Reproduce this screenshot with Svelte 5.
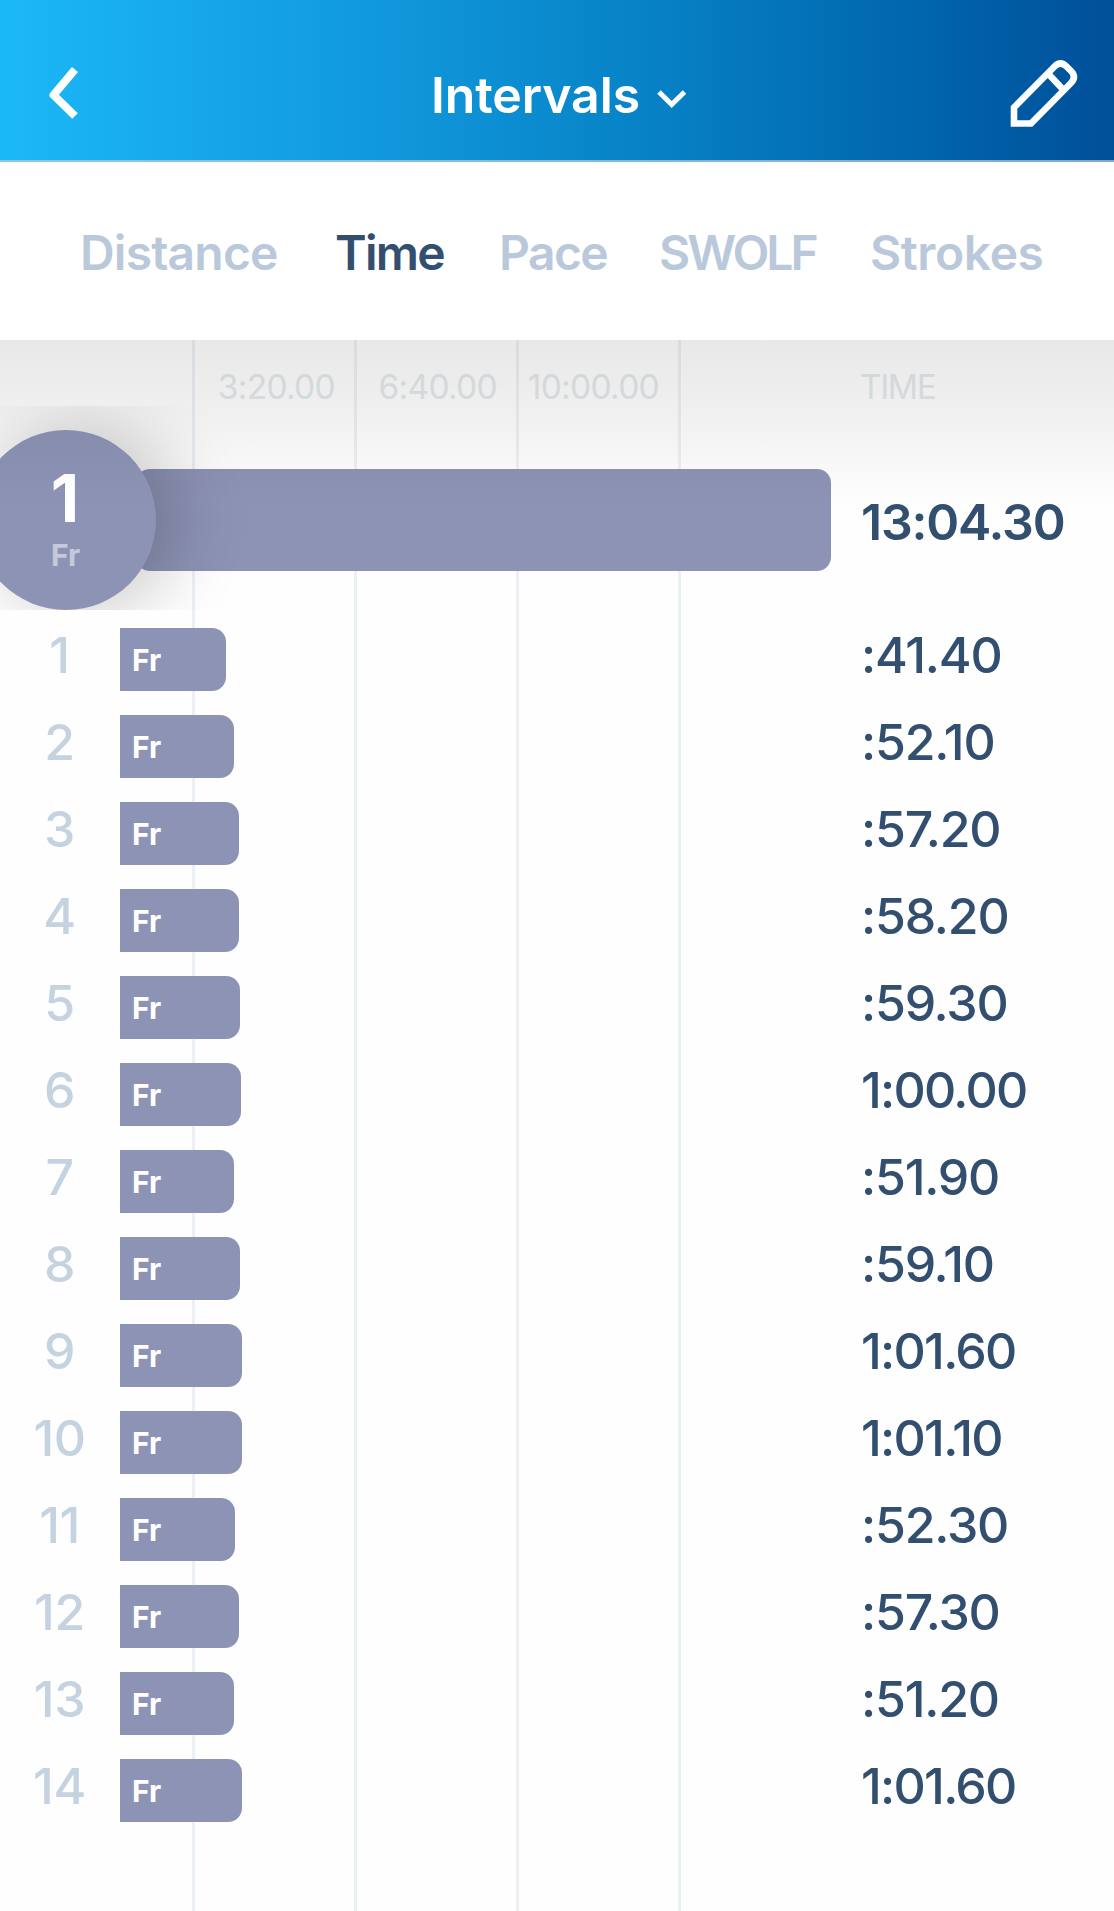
<script>
  const tabs = [
    { name: "Distance", key: "distance" },
    { name: "Time", key: "time" },
    { name: "Pace", key: "pace" },
    { name: "SWOLF", key: "swolf" },
    { name: "Strokes", key: "strokes" },
  ];

  const ticks = ["3:20.00", "6:40.00", "10:00.00"];

  const laps = [
    { time: ":41.40", bar: 106 },
    { time: ":52.10", bar: 114 },
    { time: ":57.20", bar: 119 },
    { time: ":58.20", bar: 119 },
    { time: ":59.30", bar: 120 },
    { time: "1:00.00", bar: 121 },
    { time: ":51.90", bar: 114 },
    { time: ":59.10", bar: 120 },
    { time: "1:01.60", bar: 122 },
    { time: "1:01.10", bar: 122 },
    { time: ":52.30", bar: 115 },
    { time: ":57.30", bar: 119 },
    { time: ":51.20", bar: 114 },
    { time: "1:01.60", bar: 122 },
  ];

  let active = $state("time");
</script>

<div class="screen">
  <header>
    <button class="back" aria-label="Back">
      <svg width="32" height="54" viewBox="0 0 32 54">
        <path d="M28 3.5 L6.5 29 L28 50" fill="none" stroke="#fff" stroke-width="8" stroke-linejoin="round" />
      </svg>
    </button>
    <button class="title">
      <span>Intervals</span>
      <svg width="30" height="20" viewBox="0 0 30 20">
        <path d="M2 3 L14.7 15.5 L27.5 3" fill="none" stroke="#fff" stroke-width="5" />
      </svg>
    </button>
    <button class="edit" aria-label="Edit">
      <svg width="68" height="68" viewBox="0 0 68 68">
        <path
          d="M4 64.5 V48.5 L44.5 7.5 Q50.5 1.5 56.5 7.5 L61 12 Q67 18 61 24 L21 64.5 Z M38 14.5 L53.5 31"
          fill="none"
          stroke="#fff"
          stroke-width="6.6"
        />
      </svg>
    </button>
  </header>

  <nav>
    {#each tabs as tab}
      <button class="tab {tab.key}" class:active={active === tab.key} onclick={() => (active = tab.key)}>
        {tab.name}
      </button>
    {/each}
  </nav>

  <main>
    <div class="grid-lines"></div>

    <div class="axis">
      {#each ticks as tick}
        <span class="tick">{tick}</span>
      {/each}
      <span class="unit">TIME</span>
    </div>

    <div class="summary">
      <div class="summary-bar"></div>
      <div class="total">13:04.30</div>
      <div class="badge-clip">
        <div class="badge">
          <span class="badge-num">1</span>
          <span class="badge-stroke">Fr</span>
        </div>
      </div>
    </div>

    <div class="laps">
      {#each laps as lap, i}
        <div class="lap">
          <span class="num">{i + 1}</span>
          <div class="track">
            <div class="bar" style="width: {lap.bar}px">Fr</div>
          </div>
          <span class="time" class:minutes={!lap.time.startsWith(":")}>{lap.time}</span>
        </div>
      {/each}
    </div>

    <div class="fade"></div>
  </main>
</div>

<style>
  .screen {
    width: 1114px;
    height: 1911px;
    display: flex;
    flex-direction: column;
    overflow: hidden;
    background: #fefefe;
    font-family: Inter, "Liberation Sans", sans-serif;
    color: #334f6f;
  }

  button {
    border: 0;
    padding: 0;
    margin: 0;
    background: none;
    font: inherit;
    color: inherit;
    cursor: pointer;
  }

  svg {
    display: block;
  }

  header {
    box-sizing: border-box;
    height: 162px;
    flex: none;
    display: grid;
    grid-template-columns: 200px 1fr 200px;
    align-items: start;
    background: linear-gradient(90deg, #1bb8f8 0%, #129ade 32%, #0884c8 56%, #0064ab 84%, #004f99 100%);
    border-bottom: 2px solid rgba(190, 205, 215, 0.7);
    color: #fff;
  }

  .back {
    padding: 66px 0 0 47px;
  }

  .title {
    display: flex;
    align-items: center;
    padding: 65px 0 0 231px;
    font-size: 50px;
    line-height: 60px;
    font-weight: 600;
    letter-spacing: -0.1px;
  }

  .title svg {
    margin: 8px 0 0 17px;
  }

  .edit {
    padding: 59px 0 0 96px;
  }

  nav {
    height: 178px;
    flex: none;
    display: flex;
    align-items: center;
    padding-left: 80px;
    background: #fff;
  }

  .tab {
    margin-top: 3px;
    font-size: 48px;
    line-height: 60px;
    font-weight: 600;
    color: #bac8db;
    text-align: left;
    white-space: nowrap;
  }

  .tab.active {
    color: #334f6f;
  }

  .distance {
    width: 255px;
    letter-spacing: -0.8px;
  }

  .tab.time {
    width: 164px;
    letter-spacing: -1.7px;
  }

  .pace {
    width: 160px;
    letter-spacing: -1.6px;
  }

  .swolf {
    width: 211px;
    letter-spacing: -3px;
  }

  .strokes {
    letter-spacing: -0.4px;
  }

  main {
    position: relative;
    flex: 1;
  }

  .grid-lines {
    position: absolute;
    top: 0;
    bottom: 0;
    left: 192px;
    width: 489px;
    background: repeating-linear-gradient(90deg, #ebf0f4 0 3px, transparent 3px 162px);
  }

  .axis {
    position: relative;
    display: grid;
    grid-template-columns: 162px 162px 162px 1fr;
    height: 90px;
    padding-left: 194px;
    font-size: 33.5px;
    line-height: 94px;
    letter-spacing: -0.7px;
    color: #e2e8eb;
  }

  .tick {
    padding-right: 21px;
    text-align: right;
  }

  .unit {
    padding-left: 180px;
    letter-spacing: -1.4px;
  }

  .summary {
    position: relative;
    display: flex;
    align-items: center;
    height: 181px;
    padding-left: 136px;
  }

  .summary-bar {
    width: 695px;
    height: 102px;
    margin-top: -1px;
    border-radius: 14px;
    background: #8d93b5;
  }

  .total {
    margin: 2px 0 0 30px;
    font-size: 50px;
    font-weight: 600;
    line-height: 60px;
    letter-spacing: -1.2px;
  }

  /* the badge shadow is cut off above and below the row */
  .badge-clip {
    position: absolute;
    top: -24px;
    left: 0;
    width: 260px;
    height: 204px;
    overflow: hidden;
  }

  .badge {
    box-sizing: border-box;
    width: 180px;
    height: 180px;
    margin: 24px 0 0 -24px;
    padding: 37px 2px 0 0;
    border-radius: 50%;
    display: flex;
    flex-direction: column;
    align-items: center;
    background: #8d93b5;
    box-shadow: 18px 0 72px rgba(0, 0, 0, 0.22);
    color: #fff;
  }

  .badge-num {
    font-size: 66px;
    line-height: 62px;
    font-weight: 700;
  }

  .badge-stroke {
    margin: 6px 0 0 1px;
    font-size: 30px;
    line-height: 40px;
    font-weight: 700;
    color: rgba(255, 255, 255, 0.5);
  }

  .laps {
    position: relative;
    margin-top: 5px;
  }

  .lap {
    display: grid;
    grid-template-columns: 120px 741px 1fr;
    align-items: center;
    height: 87px;
  }

  .num,
  .lap .time {
    padding-bottom: 10px;
    font-size: 50px;
    line-height: 60px;
    letter-spacing: -1.2px;
  }

  .num {
    padding-right: 1px;
    text-align: center;
    font-weight: 500;
    letter-spacing: -0.4px;
    color: #c5d3e1;
  }

  .lap .time {
    font-weight: 500;
  }

  .lap .time.minutes {
    letter-spacing: -1.7px;
  }

  .bar {
    box-sizing: border-box;
    height: 63px;
    padding: 1px 0 0 12px;
    border-radius: 0 14px 14px 0;
    background: #8d93b5;
    color: #fff;
    font-size: 30px;
    line-height: 63px;
    font-weight: 700;
  }

  .fade {
    position: absolute;
    top: 0;
    left: 0;
    right: 0;
    height: 165px;
    background: linear-gradient(rgba(0, 0, 0, 0.085), rgba(0, 0, 0, 0.05) 50%, rgba(0, 0, 0, 0));
    pointer-events: none;
  }
</style>
